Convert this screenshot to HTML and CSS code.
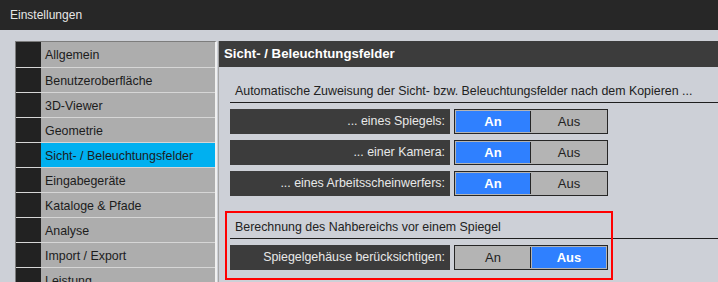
FILE: index.html
```html
<!DOCTYPE html>
<html lang="de">
<head>
  <meta charset="UTF-8" />
  <title>Einstellungen</title>
  <link rel="stylesheet" href="styles.css">
</head>
<body>

  <div class="titlebar">Einstellungen</div>

  <div class="main">
    <!-- Navigation -->
    <ul class="nav">
      <li><span class="box"></span><span class="label">Allgemein</span></li>
      <li><span class="box"></span><span class="label">Benutzeroberfläche</span></li>
      <li><span class="box"></span><span class="label">3D-Viewer</span></li>
      <li><span class="box"></span><span class="label">Geometrie</span></li>
      <li class="active"><span class="box"></span><span class="label">Sicht- / Beleuchtungsfelder</span></li>
      <li><span class="box"></span><span class="label">Eingabegeräte</span></li>
      <li><span class="box"></span><span class="label">Kataloge &amp; Pfade</span></li>
      <li><span class="box"></span><span class="label">Analyse</span></li>
      <li><span class="box"></span><span class="label">Import / Export</span></li>
      <li><span class="box"></span><span class="label">Leistung</span></li>
    </ul>

    <!-- Settings panel -->
    <div class="panel">
      <div class="panel-head">Sicht- / Beleuchtungsfelder</div>
      <div class="panel-body">
        <div class="group-title">Automatische Zuweisung der Sicht- bzw. Beleuchtungsfelder nach dem Kopieren ...</div>
        <div class="row">
          <div class="row-label">... eines Spiegels:</div>
          <div class="toggle"><span class="opt on">An</span><span class="opt">Aus</span></div>
        </div>
        <div class="row">
          <div class="row-label">... einer Kamera:</div>
          <div class="toggle"><span class="opt on">An</span><span class="opt">Aus</span></div>
        </div>
        <div class="row">
          <div class="row-label">... eines Arbeitsscheinwerfers:</div>
          <div class="toggle"><span class="opt on">An</span><span class="opt">Aus</span></div>
        </div>

        <div class="group-title second">Berechnung des Nahbereichs vor einem Spiegel</div>
        <div class="row">
          <div class="row-label">Spiegelgehäuse berücksichtigen:</div>
          <div class="toggle"><span class="opt">An</span><span class="opt on">Aus</span></div>
        </div>
      </div>
    </div>
  </div>

  <!-- highlight frame -->
  <div class="highlight"></div>

</body>
</html>
```

FILE: styles.css
```css
:root {
  --bg: #cdd0d7;
  --dark: #3c3c3c;
  --item: #adadad;
  --accent: #2f80ff;
  --select: #00b0f0;
}

body {
  margin: 0;
  background: var(--bg);
  font-family: 'Liberation Sans', Arial, sans-serif;
  font-size: 12.4px;
  height: 282px;
  overflow: hidden;
  position: relative;
}

.titlebar {
  height: 30px;
  line-height: 30px;
  background: #272727;
  color: #e6e6e6;
  padding-left: 10px;
  font-size: 12px;
}

.main {
  display: flex;
  padding: 11px 0 0 15px;
}

.nav {
  list-style: none;
  margin: 0;
  padding: 0;
  width: 199px;
  border-top: 1px solid #7c7c7c;
  border-left: 1px solid #7c7c7c;
  border-right: 2px solid #f0f0f0;
}

.nav li {
  display: flex;
  height: 24px;
  border-bottom: 1px solid #d6d6d6;
}

.nav li:first-child {
  height: 25px;
}

.nav .box {
  width: 25px;
  background: #222222;
}

.nav .label {
  flex: 1;
  background: var(--item);
  color: #1c1c1c;
  line-height: 26px;
  padding-left: 4px;
  white-space: nowrap;
  overflow: hidden;
}

.nav li.active .label {
  background: var(--select);
}

.panel {
  flex: 1;
  margin-left: 1px;
  border-left: 1px solid #a6a6a6;
}

.panel-head {
  height: 26px;
  line-height: 26px;
  background: var(--dark);
  color: #ffffff;
  font-weight: bold;
  font-size: 13.2px;
  padding-left: 5px;
}

.panel-body {
  padding-left: 11px;
}

.group-title {
  margin-top: 13px;
  height: 22px;
  line-height: 22px;
  padding-left: 5px;
  color: #222222;
  border-bottom: 1px solid #1e1e1e;
  margin-bottom: 6px;
  white-space: nowrap;
}

.group-title.second {
  margin-top: 20px;
}

.row {
  display: flex;
  gap: 4px;
  height: 25px;
  margin-bottom: 6px;
}

.row-label {
  width: 215px;
  padding-right: 5px;
  background: var(--dark);
  color: #e8e8e8;
  text-align: right;
  line-height: 25px;
}

.toggle {
  width: 150px;
  display: flex;
  border: 1px solid #262626;
  padding: 1px;
  background: #b4b4b4;
}

.opt {
  flex: 1;
  text-align: center;
  line-height: 21px;
  font-size: 13px;
  color: #222222;
}

.opt:first-child {
  border-right: 1px solid #262626;
  margin-right: 1px;
}

.opt.on {
  background: var(--accent);
  color: #ffffff;
  font-weight: bold;
}

.highlight {
  position: absolute;
  left: 225px;
  top: 211px;
  width: 388px;
  height: 69px;
  box-sizing: border-box;
  border: 2px solid #ff0000;
}
```
